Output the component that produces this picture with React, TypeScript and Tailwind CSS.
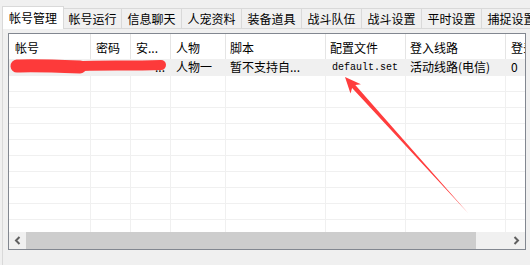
const tabs = ['帐号运行', '信息聊天', '人宠资料', '装备道具', '战斗队伍', '战斗设置', '平时设置', '捕捉设置'];

// column widths include the 1px divider on the right
const cols = [
  { title: '帐号', w: 'w-[82px]', pl: 'pl-[6px]' },
  { title: '密码', w: 'w-[40px]', pl: 'pl-[5px]' },
  { title: '安...', w: 'w-[40px]', pl: 'pl-[5px]' },
  { title: '人物', w: 'w-[55px]', pl: 'pl-[5px]' },
  { title: '脚本', w: 'w-[100px]', pl: 'pl-[4px]' },
  { title: '配置文件', w: 'w-[80px]', pl: 'pl-[4px]' },
  { title: '登入线路', w: 'w-[100px]', pl: 'pl-[4px]' },
  { title: '登录状态', w: 'w-[60px]', pl: 'pl-[5px]' },
];

function Chevron({ dir }: { dir: 'left' | 'right' }) {
  return (
    <svg width="7" height="9" viewBox="0 0 7 9">
      {dir === 'left' ? (
        <path d="M5.5 1 L2 4.5 L5.5 8" fill="none" stroke="#606060" strokeWidth="2" />
      ) : (
        <path d="M1.5 1 L5 4.5 L1.5 8" fill="none" stroke="#606060" strokeWidth="2" />
      )}
    </svg>
  );
}

function TabStrip() {
  return (
    <div className="flex items-end h-[29px] pl-[2px] whitespace-nowrap">
      <div className="relative z-10 w-[62px] h-[23px] shrink-0 bg-white border-l border-t border-r border-[#d9d9d9] flex items-center justify-center">
        帐号管理
      </div>
      {tabs.map((t, i) => (
        <div
          key={t}
          className={`${i === 0 ? 'w-[58px]' : 'w-[60px]'} h-[21px] shrink-0 border-t border-r border-b border-[#d9d9d9] bg-[#f0f0f0] flex items-center justify-center`}
        >
          {t}
        </div>
      ))}
    </div>
  );
}

function ListView() {
  const data = ['', '', '...', '人物一', '暂不支持自...', 'default.set', '活动线路(电信)', '0'];
  return (
    <div className="w-[518px] h-[217px] border border-[#828790] bg-white flex flex-col overflow-hidden">
      <div className="flex h-[25px] shrink-0 whitespace-nowrap">
        {cols.map((c) => (
          <div key={c.title} className={`${c.w} ${c.pl} shrink-0 h-full border-r border-[#e5e5e5] flex items-center pt-[2px] overflow-hidden`}>
            {c.title}
          </div>
        ))}
      </div>
      <div className="h-[173px] shrink-0 overflow-hidden">
        <div className="flex h-[16px] bg-[#f0f0f0] whitespace-nowrap">
          {cols.map((c, i) => (
            <div
              key={i}
              className={`${c.w} ${c.pl} shrink-0 h-full flex items-center overflow-hidden ${i === 5 ? "font-['Liberation_Mono',monospace] text-[10px] pl-[6px]" : ''} ${i === 2 ? 'justify-end pr-[6px]' : ''}`}
            >
              {data[i]}
            </div>
          ))}
        </div>
        {Array.from({ length: 10 }).map((_, r) => (
          <div key={r} className="flex h-[16px] border-t border-[#f0f0f0]">
            {cols.map((c, i) => (
              <div key={i} className={`${c.w} shrink-0 h-full border-r border-[#f0f0f0]`} />
            ))}
          </div>
        ))}
      </div>
      <div className="flex h-[17px] shrink-0 bg-[#f0f0f0]">
        <div className="w-[17px] h-full flex items-center justify-center">
          <Chevron dir="left" />
        </div>
        <div className="flex-1 h-full">
          <div className="w-[450px] h-full bg-[#cdcdcd]" />
        </div>
        <div className="w-[17px] h-full flex items-center justify-center">
          <Chevron dir="right" />
        </div>
      </div>
    </div>
  );
}

export default function App() {
  return (
    <div className="relative w-[530px] h-[265px] bg-[#f0f0f0] overflow-hidden text-[12px] text-black font-['Noto_Sans_CJK_SC','Noto_Sans',sans-serif] flex flex-col">
      <TabStrip />
      <div className="flex-1 ml-[2px] border-l border-[#d9d9d9] pl-[5px] pt-[4px]">
        <ListView />
      </div>

      {/* annotation drawn over the screenshot: redaction scribble + arrow */}
      <svg className="absolute left-0 top-0 pointer-events-none" width="530" height="265" viewBox="0 0 530 265">
        <g stroke="#fd3a3a" strokeLinecap="round" strokeLinejoin="round" fill="none">
          <path d="M17 66 C32 65 56 66 80 67" strokeWidth="13" />
          <path d="M80 66 C100 65 130 66 161 65" strokeWidth="10" />
        </g>
        <polygon
          points="345,77 350.5,93.6 352.1,88.1 468,213 355.3,85.1 360.9,84.2"
          fill="#ff3d3d"
        />
      </svg>
    </div>
  );
}
